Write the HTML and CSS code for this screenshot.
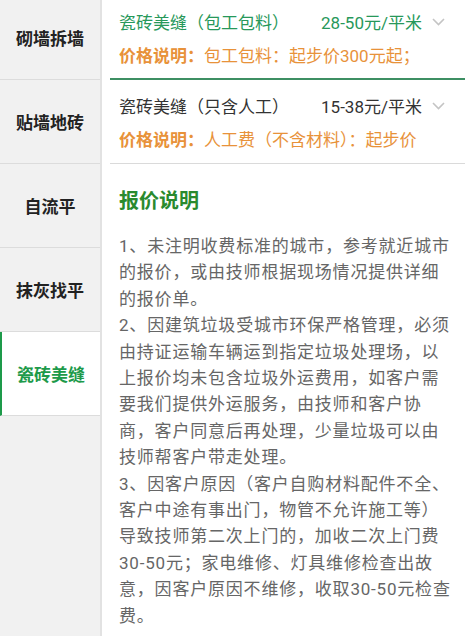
FILE: index.html
```html
<!DOCTYPE html>
<html lang="zh-CN">
<head>
    <meta charset="UTF-8">
    <meta name="viewport" content="width=device-width, initial-scale=1.0">
    <title>报价</title>
    <link rel="stylesheet" href="styles.css">
</head>
<body>
    <div class="page">
        <div class="side-menu">
            <div class="menu-item">砌墙拆墙</div>
            <div class="menu-item">贴墙地砖</div>
            <div class="menu-item">自流平</div>
            <div class="menu-item">抹灰找平</div>
            <div class="menu-item active">瓷砖美缝</div>
        </div>
        <div class="content">
            <div class="price-row open">
                <div class="row-head">
                    <div class="row-title">瓷砖美缝（包工包料）</div>
                    <div class="row-price">28-50元/平米</div>
                    <svg class="chevron" width="13" height="8" viewBox="0 0 13 8"><polyline points="1,1 6.5,6.5 12,1" fill="none" stroke="#c4c4c4" stroke-width="1.6"/></svg>
                </div>
                <div class="row-note"><b>价格说明：</b>包工包料：起步价300元起；</div>
            </div>
            <div class="price-row">
                <div class="row-head">
                    <div class="row-title">瓷砖美缝（只含人工）</div>
                    <div class="row-price">15-38元/平米</div>
                    <svg class="chevron" width="13" height="8" viewBox="0 0 13 8"><polyline points="1,1 6.5,6.5 12,1" fill="none" stroke="#c4c4c4" stroke-width="1.6"/></svg>
                </div>
                <div class="row-note"><b>价格说明：</b>人工费（不含材料）：起步价</div>
            </div>
            <div class="notes">
                <h2>报价说明</h2>
                <p>1、未注明收费标准的城市，参考就近城市的报价，或由技师根据现场情况提供详细的报价单。</p>
                <p>2、因建筑垃圾受城市环保严格管理，必须由持证运输车辆运到指定垃圾处理场，以上报价均未包含垃圾外运费用，如客户需要我们提供外运服务，由技师和客户协商，客户同意后再处理，少量垃圾可以由技师帮客户带走处理。</p>
                <p>3、因客户原因（客户自购材料配件不全、客户中途有事出门，物管不允许施工等）导致技师第二次上门的，加收二次上门费30-50元；家电维修、灯具维修检查出故意，因客户原因不维修，收取30-50元检查费。</p>
            </div>
        </div>
    </div>
</body>
</html>
```

FILE: styles.css
```css
body {
    font-family: Roboto, "Noto Sans CJK SC", sans-serif;
    margin: 0;
    padding: 0;
    background-color: #fff;
    height: 636px;
    overflow: hidden;
}
.page {
    display: flex;
    margin-top: -4px;
    height: 640px;
}
.side-menu {
    width: 100px;
    flex-shrink: 0;
    background-color: #f1f1f1;
    border-right: 2px solid #e2e2e2;
}
.menu-item {
    height: 83px;
    border-bottom: 1px solid #dcdcdc;
    display: flex;
    align-items: center;
    justify-content: center;
    font-size: 17px;
    font-weight: bold;
    color: #222;
}
.menu-item.active {
    background-color: #fff;
    border-left: 2px solid #1d9a4a;
    color: #1d9a4a;
}
.content {
    flex: 1;
    padding-left: 8px;
    min-width: 0;
}
.price-row {
    height: 60px;
    padding: 13px 0 10px 9px;
    border-bottom: 1px solid #dadada;
}
.price-row.open {
    height: 59px;
    border-bottom: 2px solid #3d8f63;
}
.row-head {
    display: flex;
    align-items: center;
    height: 24px;
    font-size: 17px;
    color: #333;
}
.row-title {
    flex: 1;
    white-space: nowrap;
}
.open .row-head {
    color: #27985a;
}
.chevron {
    margin: 2px 20px 0 10px;
}
.row-note {
    margin-top: 11px;
    line-height: 24px;
    font-size: 17px;
    color: #e8923a;
    white-space: nowrap;
    overflow: hidden;
}
.notes {
    padding: 0 10px 0 9px;
}
.notes h2 {
    margin: 23px 0 0;
    font-size: 20px;
    line-height: 28px;
    color: #2a8a2e;
}
.notes h2 + p {
    margin-top: 18px;
}
.notes p {
    margin: 0;
    font-size: 17px;
    line-height: 26.4px;
    letter-spacing: 0.8px;
    color: #666;
}
```
